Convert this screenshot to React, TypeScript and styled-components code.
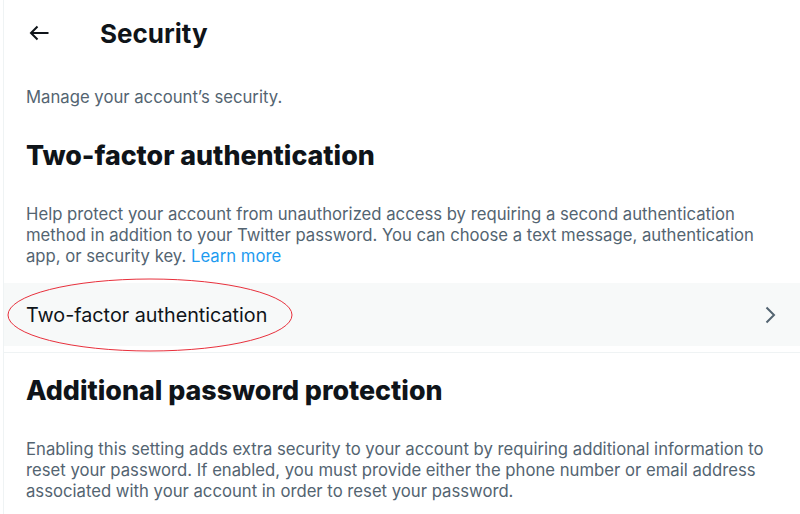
import React from "react";
import styled, { createGlobalStyle } from "styled-components";

const GlobalStyle = createGlobalStyle`
  html, body {
    margin: 0;
    padding: 0;
    background: #ffffff;
  }
  body {
    font-family: "Inter", "Noto Sans", sans-serif;
    color: #0f1419;
    -webkit-font-smoothing: antialiased;
  }
`;

const Page = styled.main`
  margin-left: 3px;
  min-height: 514px;
  border-left: 1px solid #eff3f4;
  overflow: hidden;
`;

const Header = styled.header`
  display: flex;
  align-items: center;
  height: 66px;
  padding-left: 18px;
`;

const BackButton = styled.button`
  display: flex;
  align-items: center;
  justify-content: center;
  width: 34px;
  height: 34px;
  padding: 0;
  border: none;
  background: transparent;
  color: #0f1419;
  cursor: pointer;
`;

const Title = styled.h1`
  margin: 0 0 0 44px;
  font-size: 26px;
  font-weight: 700;
  letter-spacing: 0;
`;

const Muted = styled.p<{ $top?: number }>`
  margin: ${(p) => p.$top ?? 0}px 0 0;
  padding: 0 22px;
  font-size: 16.7px;
  line-height: 21px;
  color: #536471;
`;

const SectionTitle = styled.h2<{ $top: number }>`
  margin: ${(p) => p.$top}px 0 0;
  padding: 0 22px;
  font-size: 26.8px;
  line-height: 32px;
  font-weight: 800;
`;

const Link = styled.a`
  color: #1d9bf0;
  text-decoration: none;
`;

const Row = styled.div`
  position: relative;
  display: flex;
  align-items: center;
  justify-content: space-between;
  height: 63px;
  margin-top: 16px;
  padding: 0 18px 0 22px;
  background: #f7f9f9;
  font-size: 19.75px;
  cursor: pointer;
`;

const RowLabel = styled.span`
  color: #0f1419;
`;

const Chevron = styled.svg`
  width: 24px;
  height: 24px;
  color: #536471;
`;

const Annotation = styled.svg`
  position: absolute;
  left: 3px;
  top: -5px;
  width: 286px;
  height: 74px;
  overflow: visible;
  pointer-events: none;
`;

const Divider = styled.hr`
  margin: 6px 0 0;
  border: none;
  border-top: 1px solid #eff3f4;
`;

export default function App() {
  return (
    <>
      <GlobalStyle />
      <Page>
        <Header>
          <BackButton aria-label="Back">
            <svg width="24" height="24" viewBox="0 0 24 24" fill="none">
              <path
                d="M21.5 12H4M10.5 5.5L4 12l6.5 6.5"
                stroke="currentColor"
                strokeWidth="2"
              />
            </svg>
          </BackButton>
          <Title>Security</Title>
        </Header>
        <Muted $top={21}>Manage your account’s security.</Muted>
        <SectionTitle $top={31}>Two-factor authentication</SectionTitle>
        <Muted $top={33}>
          Help protect your account from unauthorized access by requiring a
          second authentication method in addition to your Twitter password.
          You can choose a text message, authentication app, or security key.{" "}
          <Link href="#">Learn more</Link>
        </Muted>
        <Row>
          <RowLabel>Two-factor authentication</RowLabel>
          <Chevron viewBox="0 0 24 24" fill="none">
            <path d="M8.5 4.5l7.5 7.5-7.5 7.5" stroke="currentColor" strokeWidth="2" />
          </Chevron>
          <Annotation viewBox="0 0 286 74">
            <ellipse cx="143" cy="37" rx="142" ry="36" fill="none" stroke="#e8303c" strokeWidth="1" />
          </Annotation>
        </Row>
        <Divider />
        <SectionTitle $top={21}>Additional password protection</SectionTitle>
        <Muted $top={33}>
          Enabling this setting adds extra security to your account by requiring
          additional information to reset your password. If enabled, you must
          provide either the phone number or email address associated with your
          account in order to reset your password.
        </Muted>
      </Page>
    </>
  );
}
